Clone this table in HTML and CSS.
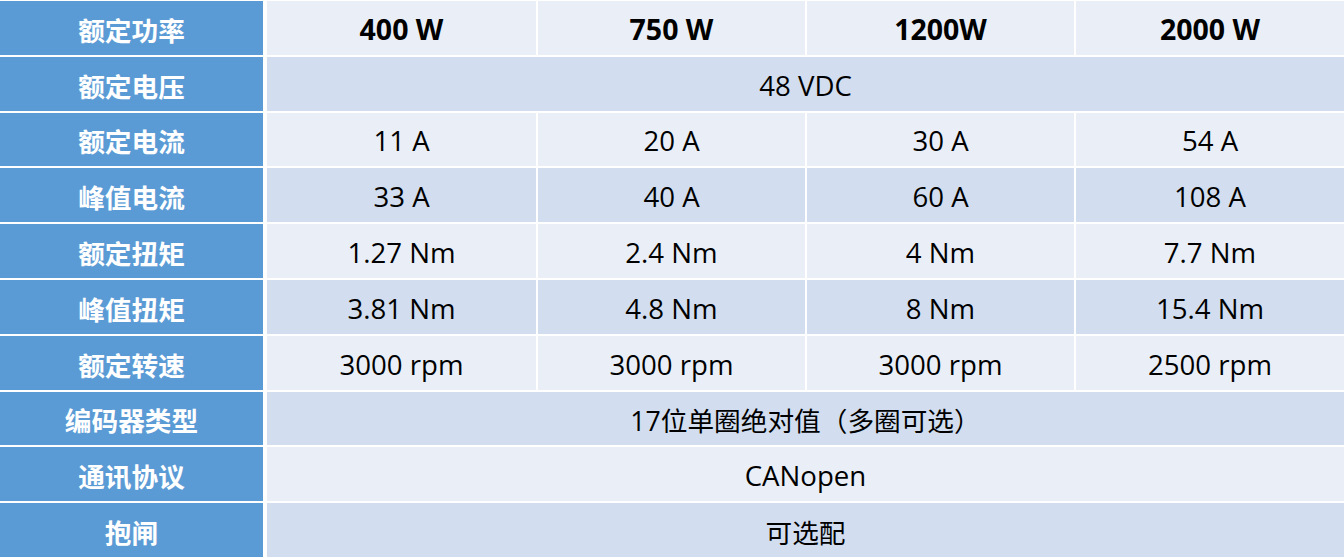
FILE: index.html
```html
<!DOCTYPE html>
<html lang="zh-CN">
<head>
<meta charset="utf-8">
<title>规格表</title>
<link rel="stylesheet" href="styles.css">
</head>
<body>
<div class="spec">
  <div class="cell label">额定功率</div>
  <div class="cell light head">400 W</div>
  <div class="cell light head">750 W</div>
  <div class="cell light head">1200W</div>
  <div class="cell light head">2000 W</div>

  <div class="cell label">额定电压</div>
  <div class="cell dark span">48 VDC</div>

  <div class="cell label">额定电流</div>
  <div class="cell light">11 A</div>
  <div class="cell light">20 A</div>
  <div class="cell light">30 A</div>
  <div class="cell light">54 A</div>

  <div class="cell label">峰值电流</div>
  <div class="cell dark">33 A</div>
  <div class="cell dark">40 A</div>
  <div class="cell dark">60 A</div>
  <div class="cell dark">108 A</div>

  <div class="cell label">额定扭矩</div>
  <div class="cell light">1.27 Nm</div>
  <div class="cell light">2.4 Nm</div>
  <div class="cell light">4 Nm</div>
  <div class="cell light">7.7 Nm</div>

  <div class="cell label">峰值扭矩</div>
  <div class="cell dark">3.81 Nm</div>
  <div class="cell dark">4.8 Nm</div>
  <div class="cell dark">8 Nm</div>
  <div class="cell dark">15.4 Nm</div>

  <div class="cell label">额定转速</div>
  <div class="cell light">3000 rpm</div>
  <div class="cell light">3000 rpm</div>
  <div class="cell light">3000 rpm</div>
  <div class="cell light">2500 rpm</div>

  <div class="cell label">编码器类型</div>
  <div class="cell dark span cjk">17位单圈绝对值（多圈可选）</div>

  <div class="cell label">通讯协议</div>
  <div class="cell light span">CANopen</div>

  <div class="cell label">抱闸</div>
  <div class="cell dark span cjk">可选配</div>
</div>
</body>
</html>
```

FILE: styles.css
```css
html, body {
  margin: 0;
  padding: 0;
  background: #ffffff;
}

body {
  width: 1344px;
  height: 558px;
  overflow: hidden;
  font-family: "Open Sans", "Noto Sans CJK SC", sans-serif;
}

.spec {
  display: grid;
  grid-template-columns: 265px 269px 267px 267px 268px;
  grid-template-rows: repeat(10, 53.8px);
  column-gap: 2px;
  row-gap: 2px;
  padding-top: 1px;
}

.cell {
  display: flex;
  align-items: center;
  justify-content: center;
  font-size: 27.6px;
  color: #000000;
  padding-top: 2px;
  box-sizing: border-box;
  white-space: nowrap;
}

.label {
  background: #5b9bd5;
  color: #ffffff;
  font-family: "Noto Sans CJK SC", sans-serif;
  font-weight: 700;
  margin-right: 2px;
  font-size: 26.67px;
  padding-top: 3px;
}

.cjk {
  font-size: 26.67px;
  padding-top: 3px;
}

.light {
  background: #eaeff7;
}

.dark {
  background: #d2deef;
}

.head {
  font-weight: 700;
  font-size: 28.5px;
}

.span {
  grid-column: span 4;
}
```
